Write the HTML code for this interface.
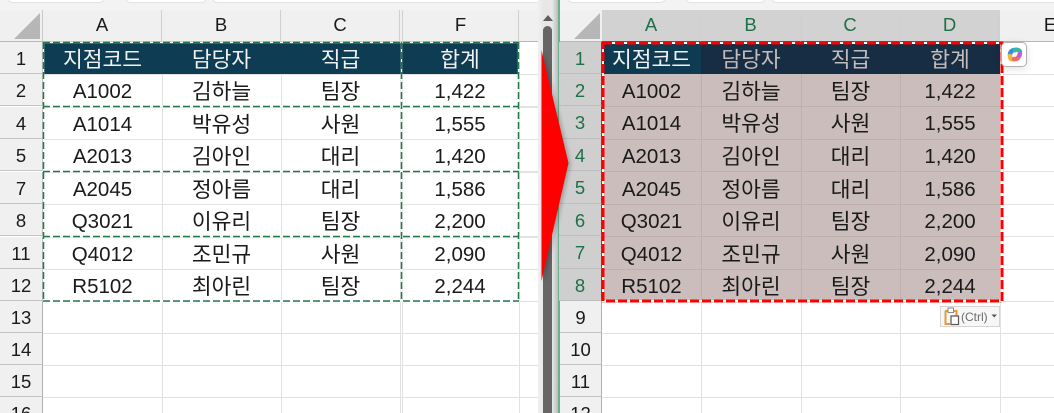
<!DOCTYPE html>
<html><head><meta charset="utf-8">
<style>
html,body{margin:0;padding:0;background:#fff}
#p{position:relative;width:1054px;height:413px;overflow:hidden;background:#fff;font-family:"Liberation Sans","Noto Sans CJK KR",sans-serif;font-size:20.5px;color:#1a1a1a}
.a{position:absolute}
.c{position:absolute;height:32px;line-height:36px;text-align:center;white-space:nowrap}
.k{font-size:21.5px}
.h{color:#f2f2f2}
.rh{position:absolute;width:43px;height:32px;line-height:33px;text-align:center;background:#f0f0f0;font-size:18.5px;box-sizing:border-box;border-bottom:1px solid #c4c4c4;border-right:1px solid #b0b0b0;overflow:hidden}
.ch{position:absolute;top:10px;height:32px;line-height:29px;text-align:center;background:#f0f0f0;font-size:18.5px;box-sizing:border-box;border-right:1px solid #d0d0d0;border-bottom:1px solid #b8b8b8;overflow:hidden}
.hl{position:absolute;height:1px;background:#e2e2e2}
.vl{position:absolute;width:1px;background:#e2e2e2}
.sh{background:#d2d2d2;color:#1f6f48;border-bottom-color:#1f7a4d}
.srh{position:absolute;left:559px;width:43px;height:32px;line-height:33px;text-align:center;background:#cfcfcf;color:#1f6f48;font-size:18.5px;box-sizing:border-box;border-bottom:1px solid #bdbdbd;border-right:1px solid #1f7a4d}
.card{position:absolute;top:-8px;height:11px;background:#fff;border:1px solid #e3e3e3;border-radius:6px;box-sizing:border-box}
</style></head><body><div id="p">

<!-- top strip -->
<div class="a" style="left:0;top:0;width:1054px;height:10px;background:#f3f3f3"></div>
<div class="card" style="left:7px;width:98px"></div>
<div class="card" style="left:125px;width:82px"></div>
<div class="card" style="left:212px;width:336px"></div>
<div class="card" style="left:567px;width:99px"></div>
<div class="card" style="left:685px;width:81px"></div>
<div class="card" style="left:771px;width:300px"></div>

<!-- LEFT gridlines -->
<div class="hl" style="left:43px;top:333px;width:495px"></div>
<div class="hl" style="left:43px;top:365px;width:495px"></div>
<div class="hl" style="left:43px;top:397px;width:495px"></div>
<div class="hl" style="left:43px;top:301px;width:495px"></div>
<div class="hl" style="left:43px;top:74px;width:495px"></div>
<div class="hl" style="left:43px;top:106px;width:495px;height:2px"></div>
<div class="hl" style="left:43px;top:139px;width:495px"></div>
<div class="hl" style="left:43px;top:171px;width:495px;height:2px"></div>
<div class="hl" style="left:43px;top:204px;width:495px"></div>
<div class="hl" style="left:43px;top:236px;width:495px;height:2px"></div>
<div class="hl" style="left:43px;top:269px;width:495px"></div>
<div class="vl" style="left:162px;top:42px;height:371px"></div>
<div class="vl" style="left:281px;top:42px;height:371px"></div>
<div class="vl" style="left:400px;top:42px;height:371px"></div>
<div class="vl" style="left:402px;top:42px;height:371px"></div>
<div class="vl" style="left:519px;top:42px;height:371px"></div>

<!-- LEFT headers -->
<div class="a" style="left:0;top:10px;width:43px;height:32px;background:#f0f0f0;border-right:1px solid #c8c8c8;box-sizing:border-box;border-bottom:1px solid #b8b8b8"></div>
<svg class="a" style="left:0;top:0" width="43" height="42"><path d="M14 39 L40 13 V39Z" fill="#b6b6b6"/></svg>
<div class="ch" style="left:43px;width:119px">A</div>
<div class="ch" style="left:162px;width:119px">B</div>
<div class="ch" style="left:281px;width:119px">C</div>
<div class="ch" style="left:400px;width:3px"></div>
<div class="ch" style="left:403px;width:116px">F</div>
<div class="ch" style="left:519px;width:20px;border-right:0"></div>

<div class="rh" style="top:42px">1</div>
<div class="rh" style="top:74px">2</div>
<div class="rh" style="top:107px">4</div>
<div class="rh" style="top:139px">5</div>
<div class="rh" style="top:172px">7</div>
<div class="rh" style="top:204px">8</div>
<div class="rh" style="top:237px">11</div>
<div class="rh" style="top:269px">12</div>
<div class="rh" style="top:301px">13</div>
<div class="rh" style="top:333px">14</div>
<div class="rh" style="top:365px">15</div>
<div class="rh" style="top:397px">16</div>

<!-- LEFT table -->
<div class="a" style="left:43px;top:42px;width:476px;height:32px;background:#0e3c53"></div>
<div class="c h k" style="left:43px;top:42px;width:119px">지점코드</div>
<div class="c h k" style="left:162px;top:42px;width:119px">담당자</div>
<div class="c h k" style="left:281px;top:42px;width:119px">직급</div>
<div class="c h k" style="left:401px;top:42px;width:118px">합계</div>

<div class="c" style="left:43px;top:74px;width:119px">A1002</div><div class="c k" style="left:162px;top:74px;width:119px">김하늘</div><div class="c k" style="left:281px;top:74px;width:119px">팀장</div><div class="c" style="left:401px;top:74px;width:118px">1,422</div>
<div class="c" style="left:43px;top:107px;width:119px">A1014</div><div class="c k" style="left:162px;top:107px;width:119px">박유성</div><div class="c k" style="left:281px;top:107px;width:119px">사원</div><div class="c" style="left:401px;top:107px;width:118px">1,555</div>
<div class="c" style="left:43px;top:139px;width:119px">A2013</div><div class="c k" style="left:162px;top:139px;width:119px">김아인</div><div class="c k" style="left:281px;top:139px;width:119px">대리</div><div class="c" style="left:401px;top:139px;width:118px">1,420</div>
<div class="c" style="left:43px;top:172px;width:119px">A2045</div><div class="c k" style="left:162px;top:172px;width:119px">정아름</div><div class="c k" style="left:281px;top:172px;width:119px">대리</div><div class="c" style="left:401px;top:172px;width:118px">1,586</div>
<div class="c" style="left:43px;top:204px;width:119px">Q3021</div><div class="c k" style="left:162px;top:204px;width:119px">이유리</div><div class="c k" style="left:281px;top:204px;width:119px">팀장</div><div class="c" style="left:401px;top:204px;width:118px">2,200</div>
<div class="c" style="left:43px;top:237px;width:119px">Q4012</div><div class="c k" style="left:162px;top:237px;width:119px">조민규</div><div class="c k" style="left:281px;top:237px;width:119px">사원</div><div class="c" style="left:401px;top:237px;width:118px">2,090</div>
<div class="c" style="left:43px;top:269px;width:119px">R5102</div><div class="c k" style="left:162px;top:269px;width:119px">최아린</div><div class="c k" style="left:281px;top:269px;width:119px">팀장</div><div class="c" style="left:401px;top:269px;width:118px">2,244</div>

<!-- LEFT marching ants -->
<svg class="a" style="left:0;top:0" width="540" height="413" fill="none">
<path d="M43 42.500H519M43 106.500H519M43 171.500H519M43 236.500H519M43 301H519M43.500 42V301M401.500 42V301M518.500 42V301" stroke="#fff" stroke-width="1.500"/>
<path d="M43 42.500H519M43 106.500H519M43 171.500H519M43 236.500H519M43 301H519M43.500 42V301M401.500 42V301M518.500 42V301" stroke="#22794e" stroke-width="1.500" stroke-dasharray="7 3"/>
</svg>

<!-- scrollbar -->
<div class="a" style="left:538px;top:0;width:20px;height:413px;background:linear-gradient(90deg,#f0f0f0,#e6e6e6 30%,#e8e8e8 70%,#bdbdbd 100%)"></div>
<svg class="a" style="left:540px;top:14px" width="16" height="10"><path d="M8 1L13 7H3Z" fill="#5e5e5e"/></svg>
<div class="a" style="left:543px;top:26px;width:9px;height:387px;background:#666;border-radius:5px 5px 0 0"></div>

<!-- RIGHT sheet -->
<div class="a" style="left:558px;top:0;width:2px;height:413px;background:#6bb08f"></div>

<div class="hl" style="left:602px;top:333px;width:452px"></div>
<div class="hl" style="left:602px;top:365px;width:452px"></div>
<div class="hl" style="left:602px;top:397px;width:452px"></div>
<div class="hl" style="left:602px;top:301px;width:452px"></div>
<div class="hl" style="left:1000px;top:74px;width:54px"></div>
<div class="hl" style="left:1000px;top:106px;width:54px"></div>
<div class="hl" style="left:1000px;top:139px;width:54px"></div>
<div class="hl" style="left:1000px;top:171px;width:54px"></div>
<div class="hl" style="left:1000px;top:204px;width:54px"></div>
<div class="hl" style="left:1000px;top:236px;width:54px"></div>
<div class="hl" style="left:1000px;top:269px;width:54px"></div>
<div class="vl" style="left:701px;top:301px;height:112px"></div>
<div class="vl" style="left:801px;top:301px;height:112px"></div>
<div class="vl" style="left:900px;top:301px;height:112px"></div>
<div class="vl" style="left:1000px;top:301px;height:112px"></div>

<div class="a" style="left:560px;top:10px;width:42px;height:32px;background:#f0f0f0;border-bottom:1px solid #b8b8b8;box-sizing:border-box"></div>
<svg class="a" style="left:560px;top:0" width="42" height="42"><path d="M14 39 L40 13 V39Z" fill="#b6b6b6"/></svg>
<div class="ch sh" style="left:602px;width:99px">A</div>
<div class="ch sh" style="left:701px;width:100px">B</div>
<div class="ch sh" style="left:801px;width:99px">C</div>
<div class="ch sh" style="left:900px;width:100px">D</div>
<div class="ch" style="left:1000px;width:100px;border-right:0">E</div>

<div class="srh" style="top:42px">1</div>
<div class="srh" style="top:74px">2</div>
<div class="srh" style="top:106px;height:33px">3</div>
<div class="srh" style="top:139px">4</div>
<div class="srh" style="top:171px;height:33px">5</div>
<div class="srh" style="top:204px">6</div>
<div class="srh" style="top:236px;height:33px">7</div>
<div class="srh" style="top:269px">8</div>
<div class="rh" style="left:560px;width:42px;top:301px">9</div>
<div class="rh" style="left:560px;width:42px;top:333px">10</div>
<div class="rh" style="left:560px;width:42px;top:365px">11</div>
<div class="rh" style="left:560px;width:42px;top:397px">12</div>

<div class="a" style="left:602px;top:42px;width:398px;height:32px;background:#172d43"></div>
<div class="a" style="left:602px;top:42px;width:99px;height:32px;background:#0f3b52"></div>
<div class="a" style="left:602px;top:74px;width:398px;height:227px;background:#cbbdbc"></div>
<div class="hl" style="left:602px;top:106px;width:398px;background:#bdb0af"></div>
<div class="hl" style="left:602px;top:139px;width:398px;background:#bdb0af"></div>
<div class="hl" style="left:602px;top:171px;width:398px;background:#bdb0af"></div>
<div class="hl" style="left:602px;top:204px;width:398px;background:#bdb0af"></div>
<div class="hl" style="left:602px;top:236px;width:398px;background:#bdb0af"></div>
<div class="hl" style="left:602px;top:269px;width:398px;background:#bdb0af"></div>
<div class="vl" style="left:701px;top:74px;height:227px;background:#bdb0af"></div>
<div class="vl" style="left:801px;top:74px;height:227px;background:#bdb0af"></div>
<div class="vl" style="left:900px;top:74px;height:227px;background:#bdb0af"></div>

<div class="c k" style="left:602px;top:42px;width:99px;color:#f2f2f2">지점코드</div>
<div class="c k" style="left:701px;top:42px;width:100px;color:#c5bdbd">담당자</div>
<div class="c k" style="left:801px;top:42px;width:99px;color:#c5bdbd">직급</div>
<div class="c k" style="left:900px;top:42px;width:100px;color:#c5bdbd">합계</div>

<div class="c" style="left:602px;top:74px;width:99px">A1002</div><div class="c k" style="left:701px;top:74px;width:100px">김하늘</div><div class="c k" style="left:801px;top:74px;width:99px">팀장</div><div class="c" style="left:900px;top:74px;width:100px">1,422</div>
<div class="c" style="left:602px;top:106px;width:99px">A1014</div><div class="c k" style="left:701px;top:106px;width:100px">박유성</div><div class="c k" style="left:801px;top:106px;width:99px">사원</div><div class="c" style="left:900px;top:106px;width:100px">1,555</div>
<div class="c" style="left:602px;top:139px;width:99px">A2013</div><div class="c k" style="left:701px;top:139px;width:100px">김아인</div><div class="c k" style="left:801px;top:139px;width:99px">대리</div><div class="c" style="left:900px;top:139px;width:100px">1,420</div>
<div class="c" style="left:602px;top:172px;width:99px">A2045</div><div class="c k" style="left:701px;top:172px;width:100px">정아름</div><div class="c k" style="left:801px;top:172px;width:99px">대리</div><div class="c" style="left:900px;top:172px;width:100px">1,586</div>
<div class="c" style="left:602px;top:204px;width:99px">Q3021</div><div class="c k" style="left:701px;top:204px;width:100px">이유리</div><div class="c k" style="left:801px;top:204px;width:99px">팀장</div><div class="c" style="left:900px;top:204px;width:100px">2,200</div>
<div class="c" style="left:602px;top:237px;width:99px">Q4012</div><div class="c k" style="left:701px;top:237px;width:100px">조민규</div><div class="c k" style="left:801px;top:237px;width:99px">사원</div><div class="c" style="left:900px;top:237px;width:100px">2,090</div>
<div class="c" style="left:602px;top:269px;width:99px">R5102</div><div class="c k" style="left:701px;top:269px;width:100px">최아린</div><div class="c k" style="left:801px;top:269px;width:99px">팀장</div><div class="c" style="left:900px;top:269px;width:100px">2,244</div>

<!-- RIGHT selection + red dashes -->
<svg class="a" style="left:0;top:0" width="1054" height="413" fill="none">
<rect x="602.500" y="42.500" width="399" height="259" stroke="#1f7a4d" stroke-width="1.500"/>
<rect x="603" y="43" width="399" height="258" stroke="#fff" stroke-width="2"/>
<rect x="603" y="43" width="399" height="258" stroke="#f00" stroke-width="3" stroke-dasharray="9 3"/>
</svg>

<!-- Copilot button -->
<div class="a" style="left:1001px;top:42px;width:26px;height:25px;background:#fff;border:1px solid #b0b0b0;border-radius:5px;box-sizing:border-box;box-shadow:0 2px 8px rgba(0,0,0,.12)"></div>
<svg class="a" style="left:1007px;top:47px" width="16" height="15" fill="none" stroke-width="4.500" stroke-linecap="round">
<path d="M3 8C3 5 5 3 8 3" stroke="#2f8fe0"/>
<path d="M8 3C10 2.500 12 3 13 4.500" stroke="#35b8a0"/>
<path d="M3 9C3 12 5 13 7 12" stroke="#f2b53a"/>
<path d="M7 12C9 12.500 11 11.500 12 9" stroke="#ef6a6a"/>
<path d="M12.500 8.500L13 6.500" stroke="#c45bd6"/>
</svg>

<!-- Paste button -->
<div class="a" style="left:940px;top:306px;width:60px;height:21px;background:#f7f7f7;border:1px solid #d4d4d4;box-sizing:border-box"></div>
<svg class="a" style="left:944px;top:307px" width="16" height="19" fill="none">
<path d="M1.500 4V17H6" stroke="#e59a3c" stroke-width="2"/>
<path d="M1 4H12.500V9" stroke="#e59a3c" stroke-width="2"/>
<rect x="4" y="1" width="5.500" height="4.500" fill="#fff" stroke="#8a8a8a"/>
<rect x="7" y="9" width="7.500" height="8.500" fill="#fff" stroke="#555" stroke-width="1.200"/>
</svg>
<div class="a" style="left:961px;top:309px;height:17px;line-height:17px;font-size:12px;color:#6b6b6b">(Ctrl)</div>
<svg class="a" style="left:991px;top:314px" width="7" height="5"><path d="M0.500 0.500H6L3.200 3.500Z" fill="#555"/></svg>

<!-- Red triangle -->
<svg class="a" style="left:530px;top:40px;filter:drop-shadow(2px 1px 2px rgba(0,0,0,.25))" width="50" height="250"><path d="M11.500 10L38.500 123L11.500 241Z" fill="#f00"/></svg>

</div></body></html>
